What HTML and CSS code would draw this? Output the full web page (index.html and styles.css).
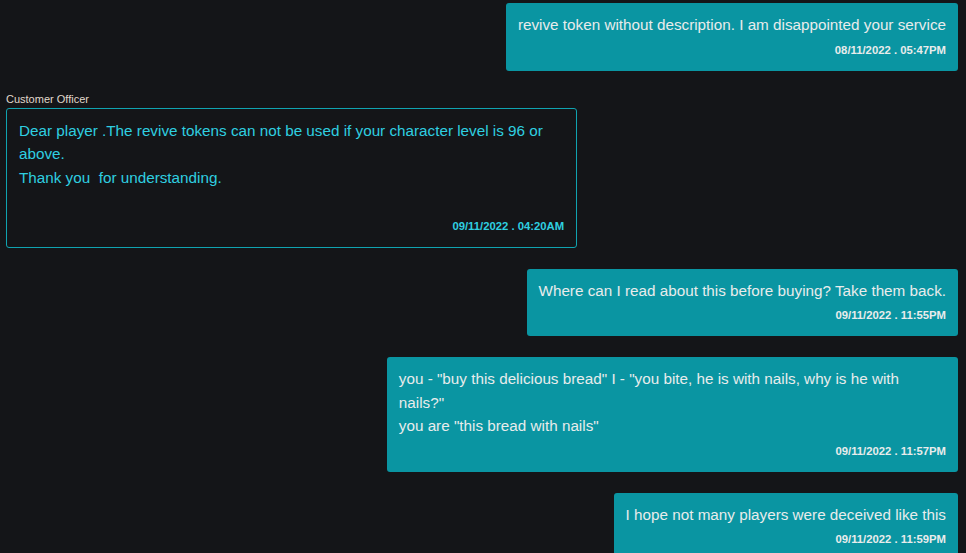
FILE: index.html
```html
<!DOCTYPE html>
<html>
	<head>
		<meta charset="utf-8" />
		<meta name="viewport" content="width=device-width, initial-scale=1" />
		<title>Support Chat</title>
		<link rel="stylesheet" href="styles.css">
	</head>
	<body>
		<div class="chat">
			<!-- player messages sit on the right, officer replies on the left -->
			<div class="msg mine">
				<div class="bubble">
					<p class="text">revive token without description. I am disappointed your service</p>
					<div class="time">08/11/2022 . 05:47PM</div>
				</div>
			</div>

			<div class="msg theirs">
				<div class="sender">Customer Officer</div>
				<div class="bubble">
					<p class="text">Dear player .The revive tokens can not be used if your character level is 96 or above.<br>Thank you &nbsp;for understanding.<br>&nbsp;</p>
					<div class="time">09/11/2022 . 04:20AM</div>
				</div>
			</div>

			<div class="msg mine">
				<div class="bubble">
					<p class="text">Where can I read about this before buying? Take them back.</p>
					<div class="time">09/11/2022 . 11:55PM</div>
				</div>
			</div>

			<div class="msg mine">
				<div class="bubble">
					<p class="text">you - "buy this delicious bread" I - "you bite, he is with nails, why is he with nails?"<br>you are "this bread with nails"</p>
					<div class="time">09/11/2022 . 11:57PM</div>
				</div>
			</div>

			<div class="msg mine">
				<div class="bubble">
					<p class="text">I hope not many players were deceived like this</p>
					<div class="time">09/11/2022 . 11:59PM</div>
				</div>
			</div>
		</div>
	</body>
</html>
```

FILE: styles.css
```css
html, body {
    margin: 0;
    background-color: #141518;
    font-family: "Liberation Sans", Arial, sans-serif;
    overflow: hidden;
}

.chat {
    display: flex;
    flex-direction: column;
    gap: 21px;
    padding: 3px 8px 0 6px;
}

.msg {
    display: flex;
    flex-direction: column;
}

.msg.mine {
    align-items: flex-end;
}

.msg.theirs {
    align-items: flex-start;
}

.sender {
    font-size: 11px;
    line-height: 14px;
    color: #e0d8cc;
    margin-bottom: 2px;
}

.bubble {
    max-width: 60%;
    box-sizing: border-box;
    padding: 10px 12px 14px 12px;
    border-radius: 3px;
}

.mine .bubble {
    background-color: #0a95a2;
    color: #e8ecec;
}

.theirs .bubble {
    width: 60%;
    border: 1px solid #10a3b0;
    color: #2fcfe0;
}

.text {
    margin: 0;
    font-size: 15.25px;
    line-height: 23.5px;
}

.time {
    margin-top: 7px;
    text-align: right;
    font-size: 11.3px;
    font-weight: bold;
    line-height: 13px;
}
```
